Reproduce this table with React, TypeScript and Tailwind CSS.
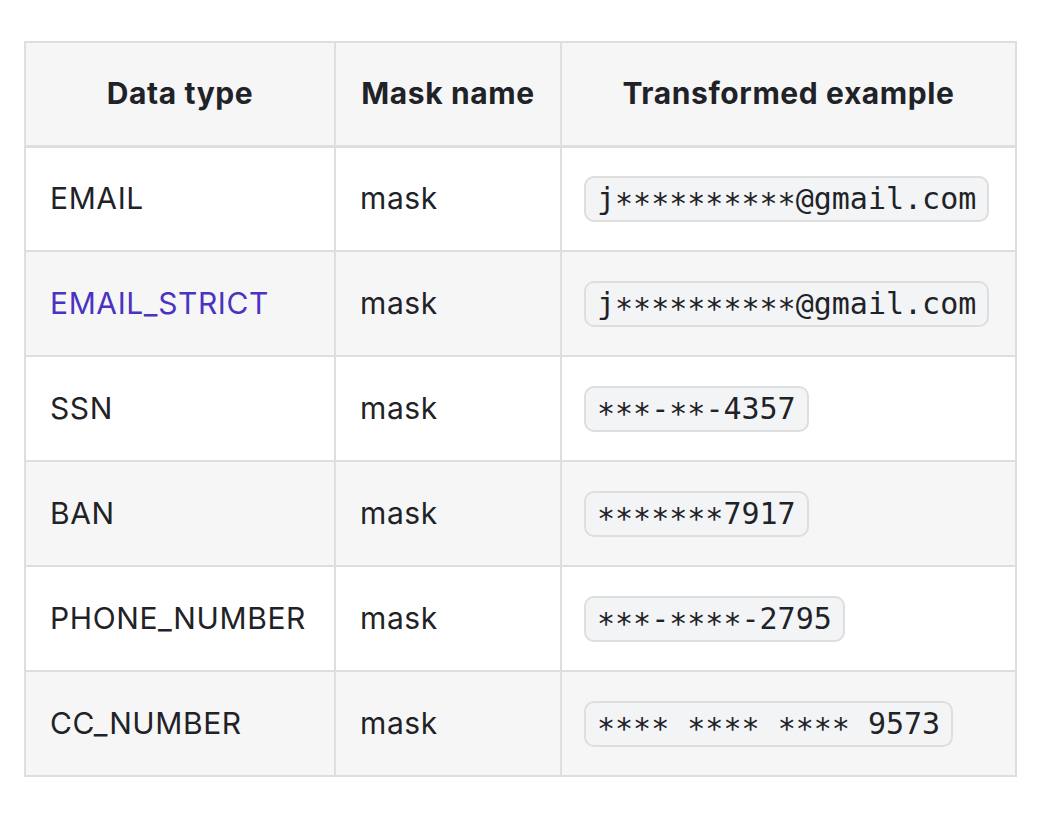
const rows = [
  { type: "EMAIL", mask: "mask", example: "j**********@gmail.com" },
  { type: "EMAIL_STRICT", mask: "mask", example: "j**********@gmail.com", link: true },
  { type: "SSN", mask: "mask", example: "***-**-4357" },
  { type: "BAN", mask: "mask", example: "*******7917" },
  { type: "PHONE_NUMBER", mask: "mask", example: "***-****-2795" },
  { type: "CC_NUMBER", mask: "mask", example: "**** **** **** 9573" },
];

// the mono font puts "*" high; drop the runs a bit so they sit mid-line like the shot
function Masked({ text }: { text: string }) {
  const parts = text.split(/(\*+)/).filter(Boolean);
  return (
    <>
      {parts.map((p, i) =>
        p.startsWith("*") ? (
          <span key={i} className="relative top-[5px]">
            {p}
          </span>
        ) : (
          <span key={i}>{p}</span>
        ),
      )}
    </>
  );
}

export default function App() {
  return (
    <div className="min-h-[814px] bg-white pt-[41px] pl-[24px] font-['Inter',sans-serif] text-[#1f2328]">
      <table className="w-[993px] border-collapse text-[30px] tracking-[0.6px]">
        <colgroup>
          <col className="w-[310px]" />
          <col className="w-[226px]" />
          <col />
        </colgroup>
        <thead>
          <tr className="h-[104px] bg-[#f6f6f6]">
            <th className="border-2 border-b-[3px] border-[#dedede] px-[24px] text-center font-bold">
              Data type
            </th>
            <th className="border-2 border-b-[3px] border-[#dedede] px-[24px] text-center font-bold">
              Mask name
            </th>
            <th className="border-2 border-b-[3px] border-[#dedede] px-[24px] text-center font-bold">
              Transformed example
            </th>
          </tr>
        </thead>
        <tbody>
          {rows.map((r, i) => (
            <tr key={r.type} className={`h-[105px] ${i % 2 === 1 ? "bg-[#f6f6f6]" : "bg-white"}`}>
              <td className={`border-2 border-[#dedede] px-[24px] ${r.link ? "text-[#4a33c0]" : ""}`}>
                {r.type}
              </td>
              <td className="border-2 border-[#dedede] px-[24px]">{r.mask}</td>
              <td className="border-2 border-[#dedede] px-[22px]">
                <code className="inline-block whitespace-pre rounded-[10px] border-2 border-[#dedede] bg-[#f3f4f5] px-[11px] py-[2px] font-['DejaVu_Sans_Mono',monospace] text-[30px] leading-[38px] tracking-normal">
                  <Masked text={r.example} />
                </code>
              </td>
            </tr>
          ))}
        </tbody>
      </table>
    </div>
  );
}
